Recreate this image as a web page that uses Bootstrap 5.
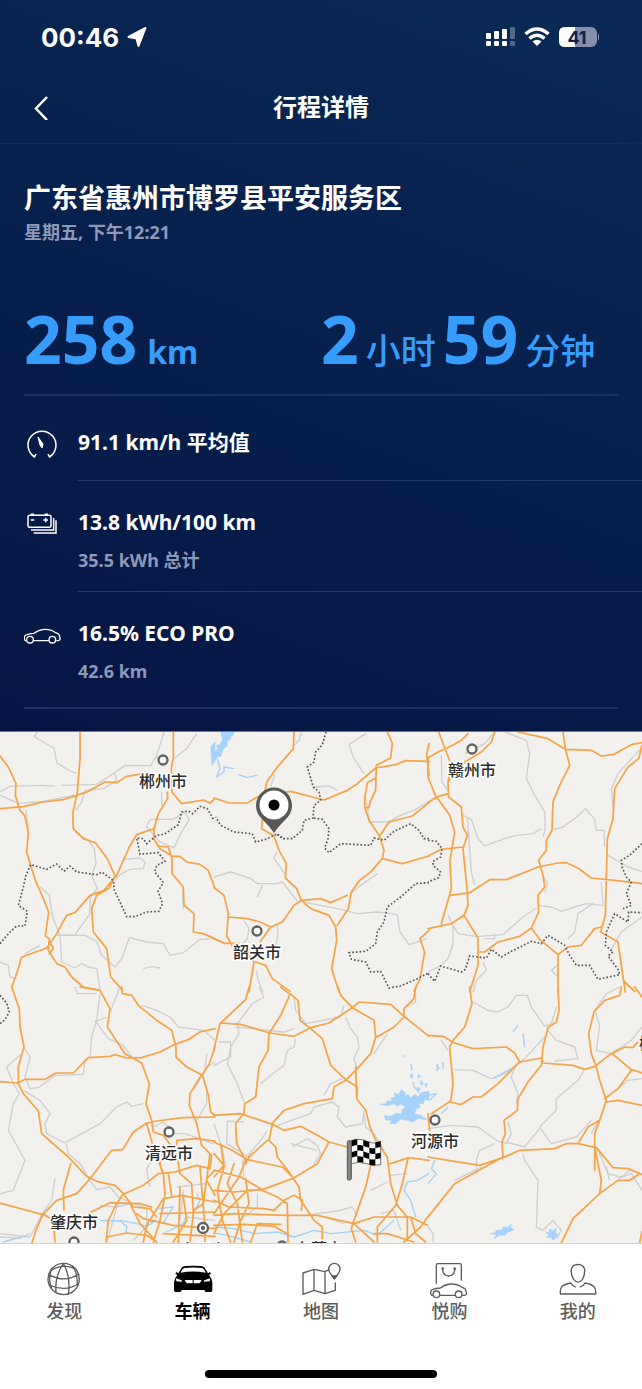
<!DOCTYPE html>
<html lang="zh-CN">
<head>
<meta charset="utf-8">
<meta name="viewport" content="width=device-width, initial-scale=1">
<title>行程详情</title>
<link href="https://cdn.jsdelivr.net/npm/bootstrap@5.3.0/dist/css/bootstrap.min.css" rel="stylesheet">
<style>
  body { font-family: "Noto Sans", "Noto Sans CJK SC", sans-serif; background: #fff; color: #fff; }
  svg { display: block; flex: none; }
  .trip { background: linear-gradient(200deg, #0a2a55 0%, #08234f 30%, #071d49 60%, #061644 100%); padding-bottom: 22px; }
  .status { height: 74px; padding: 0 43px 0 41px; font-family: "Inter", sans-serif; font-weight: 700; font-size: 26px; }
  .topbar { height: 70px; border-bottom: 1px solid #142c5a; padding: 0 24px 4px; }
  .topbar h1 { font-size: 24px; line-height: 36px; margin: 0; font-weight: 700; }
  .side { width: 48px; height: 48px; }
  .back { border: 0; background: none; padding: 0 9px; color: #fff; }
  .place h2 { font-size: 27px; line-height: 36px; font-weight: 700; margin: 0; padding-top: 36px; }
  .muted { font-size: 18px; line-height: 24px; font-weight: 700; color: #8d99b8; }
  .stats { color: #369dff; border-bottom: 2px solid #1c315f; padding: 52px 0 0; line-height: 84px; }
  .figures { gap: 7px; }
  .num { font-size: 66px; font-weight: 700; }
  .unit { font-size: 35px; font-weight: 500; }
  .unit-latin { font-size: 32px; font-weight: 700; padding-left: 3px; }
  .icon-cell { width: 54px; }
  .line-title { font-size: 21px; line-height: 28px; font-weight: 700; }
  .entry { padding-top: 27px; padding-bottom: 19px; }
  .ruled { border-bottom: 1px solid #263a66; }
  .end-rule { border-bottom: 2px solid #1c315f; }
  .map-area { background: #f2f1ee; border-top: 1px solid #6d76a0; border-bottom: 1px solid #d4d4d4; }
  .map-area svg { width: 100%; height: auto; }
  .road { fill: none; stroke: #f5a448; stroke-width: 5.2; stroke-linejoin: round; stroke-linecap: round; }
  .minor { fill: none; stroke: #cfcfd1; stroke-width: 4; stroke-linejoin: round; }
  .border-dots { fill: none; stroke: #555; stroke-width: 5; stroke-dasharray: 5 6; }
  .river { fill: none; stroke: #a5d0f5; stroke-width: 4; stroke-linejoin: round; }
  .lake { fill: #a5d3fb; stroke: #a5d3fb; stroke-width: 2; }
  .town { fill: #fff; stroke: #606060; stroke-width: 2.3; }
  .city { font: 500 16px "Noto Sans CJK SC", sans-serif; fill: #2b2b2b; stroke: #fff; stroke-width: 3px; paint-order: stroke; text-anchor: middle; }
  .tabs { padding-top: 17px; padding-bottom: 47px; }
  .tab-link { flex: 1 1 0; color: #5c5c5c; text-decoration: none; font-size: 18px; line-height: 24px; font-weight: 500; }
  .tab-link.active { color: #000; font-weight: 700; }
  .thin { fill: none; stroke: currentColor; stroke-width: 4; stroke-linejoin: round; stroke-linecap: round; }
  .home { width: 36%; height: 8px; border-radius: 4px; background: #000; }
</style>
</head>
<body>
<svg width="0" height="0" class="position-absolute" aria-hidden="true">
  <symbol id="sedan" viewBox="0 0 117 54">
    <path fill="none" stroke="currentColor" stroke-width="4" stroke-linejoin="round" d="M10 41H8Q4 38 5 31Q5 27 10 24Q20 20 34 19Q48 8 64 7Q84 6 99 17L108 21Q113 30 112 37Q112 40 106 41H101M32 41H78"/>
    <circle cx="22" cy="38" r="10" fill="none" stroke="currentColor" stroke-width="4"/><circle cx="89" cy="38" r="10" fill="none" stroke="currentColor" stroke-width="4"/>
  </symbol>
</svg>

<main>
<section class="trip">
  <div class="status d-flex align-items-center justify-content-between">
    <div class="d-flex align-items-center gap-2"><span>00:46</span>
      <svg width="20" height="22" viewBox="0 0 20 22" fill="#fff" stroke="#fff" stroke-width="2" stroke-linejoin="round"><path d="M18.500 2L11.500 20L9.500 12.500L1.500 11Z"/></svg>
    </div>
    <div class="d-flex align-items-center gap-2">
      <svg width="31" height="20" viewBox="0 0 31 20" fill="#fff"><rect x="1" y="6" width="5" height="6" rx="1"/><rect x="9" y="4" width="5" height="8" rx="1"/><rect x="17" y="2" width="5" height="10" rx="1"/><rect x="25" y="0" width="5" height="12" rx="1" opacity=".3"/><rect x="1" y="14" width="5" height="5" rx="1"/><rect x="9" y="14" width="5" height="5" rx="1"/><rect x="17" y="14" width="5" height="5" rx="1"/><rect x="25" y="14" width="5" height="5" rx="1" opacity=".3"/></svg>
      <svg width="26" height="20" viewBox="0 0 26 20" fill="none" stroke="#fff" stroke-width="3.500"><path d="M1.500 7Q13-3 24.500 7M5.500 11.500Q13 5 20.500 11.500"/><path d="M13 19L8.500 14.500Q13 11 17.500 14.500Z" fill="#fff" stroke="none"/></svg>
      <svg width="41" height="22" viewBox="0 0 41 22"><rect x="1" y="1" width="38" height="20" rx="6" fill="#8490ab"/><path d="M17 1H7Q1 1 1 7V15Q1 21 7 21H17Z" fill="#fff"/><path d="M40 7.500Q41.500 9 41.500 11T40 14.500Z" fill="#8490ab"/><text x="19" y="17.500" text-anchor="middle" font-size="18" fill="#0a2350">41</text></svg>
    </div>
  </div>

  <header class="topbar d-flex align-items-center justify-content-between">
    <button type="button" class="back side" aria-label="返回"><svg width="18" height="26" viewBox="0 0 18 26" fill="none" stroke="#fff" stroke-width="2.500"><path d="M14 3L3 14.500L14 26"/></svg></button>
    <h1>行程详情</h1>
    <span class="side"></span>
  </header>

  <div class="px-4">
    <div class="place">
      <h2>广东省惠州市博罗县平安服务区</h2>
      <p class="muted m-0 pt-1">星期五, 下午12:21</p>
    </div>
    <div class="stats row g-0">
      <div class="figures col-6 d-flex align-items-baseline"><span class="num">258</span><span class="unit-latin">km</span></div>
      <div class="figures col-6 d-flex align-items-baseline"><span class="num">2</span><span class="unit">小时</span><span class="num">59</span><span class="unit">分钟</span></div>
    </div>
  </div>

  <div class="ps-4 d-flex">
    <div class="icon-cell pt-3"><svg class="mt-3" width="36" height="34" viewBox="24 428 36 34" fill="none" stroke="#fff" stroke-width="1.500"><path d="M36 454L34.500 457A14 14 0 1 1 49.500 457L48 454"/><path d="M38 437L43 444L42 448L40 445Z" fill="#fff" stroke-width="1"/></svg></div>
    <div class="flex-grow-1 entry ruled line-title pt-4 pb-4"><div class="pt-2">91.1 km/h 平均值</div></div>
  </div>
  <div class="ps-4 d-flex">
    <div class="icon-cell entry"><svg class="mt-1" width="36" height="24" viewBox="74 64 108 72" fill="none" stroke="#fff" stroke-width="4.500"><rect x="86" y="74" width="69" height="36" rx="5"/><path d="M94 71H104M136 71H146M94 88H105M132 88H146M139 81V95M95 118H163V82M103 127H170V89"/></svg></div>
    <div class="flex-grow-1 entry ruled"><div class="line-title">13.8 kWh/100 km</div><div class="muted mt-2 pt-1">35.5 kWh 总计</div></div>
  </div>
  <div class="mx-4 d-flex end-rule">
    <div class="icon-cell entry"><svg class="mt-2" width="37" height="18" viewBox="4 0 111 54"><use href="#sedan" width="117" height="54"/></svg></div>
    <div class="flex-grow-1 entry pb-4"><div class="line-title">16.5% ECO PRO</div><div class="muted mt-2 pt-1">42.6 km</div></div>
  </div>
</section>

<section class="map-area" aria-label="行程地图">
<svg viewBox="0 0 642 511" role="img" aria-label="路线图">
  <!-- north-west -->
  <g transform="scale(.33333)">
    <path class="minor" d="M112 0L103 14L140 36L162 48L170 92L205 114L228 124M0 180L30 163L125 160L165 163M185 160L290 157L340 125L375 100L452 101L470 70L492 0M0 190L55 214L130 208L220 190M590 5L560 50L516 85M345 125L350 145L310 170L255 175L245 210L228 235M445 270L455 262L520 262L553 240L568 262L545 300L522 347L480 330L440 285L445 270M370 382L420 378L435 390L430 410L390 412L360 428L345 445M225 300L265 325L283 350L288 395L275 430L292 470L272 495L268 548L225 608L172 610M78 235L85 290M120 465L148 490L158 555L180 610L185 690L225 708L245 695L265 705L290 710L300 770M185 610L255 610L290 628L305 670L345 705L365 680L388 617L440 630L490 635L510 670L550 662L600 622L645 620M430 710L455 704L480 708M0 690L25 700L30 735L50 740M120 640L75 665M485 180V220M548 470L550 530"/>
    <path class="road" d="M0 72L25 105L48 155L46 190L60 235L74 250L85 300L80 360L95 410L110 455L128 495L146 540L136 612L148 620L145 655L170 695L195 705L215 735L250 765L298 774M240 0L240 80L232 180L218 245L220 290L250 320L287 333L322 380L345 432L328 468L290 490L275 530L280 600L320 650L332 735L368 775M0 230L70 224L128 210L190 203L265 178L315 150L350 152L380 133L435 124M520 0V75L514 110L516 180L545 215L610 204L630 213L645 200M502 180L503 200L475 245L462 290L410 308L388 345L350 430L312 475L270 490L225 542L200 550L170 605L140 648L65 675L50 725L35 765M462 290V322L480 350L518 373L540 373L560 390L600 397L625 415L645 470M475 342L505 345L516 380V425L550 465L552 520L582 545L580 600L610 605L645 620M148 665L160 650L150 630"/>
    <path class="border-dots" d="M0 635L30 600L50 582H75L82 538L55 520L70 465L78 430L92 398L140 412L170 396L192 418L210 402L230 420L290 428L305 420L340 445L343 475L360 510L380 554H405L440 540L476 538L488 515L474 478L490 452L464 420L470 400L495 388L475 362L420 367L410 318L430 320L440 335L470 310L493 307L535 278L545 240L565 237L578 245L600 223L622 230L640 262"/>
    <path class="lake" d="M632 45L645 30V85L636 100Z"/>
  </g>
  <!-- north -->
  <g transform="translate(214) scale(.33333)">
    <path class="lake" d="M20 0H62L55 12L48 10L50 20L38 30L40 42L28 50L20 75L12 72L0 92V60L12 52L8 40L18 38L26 20Z"/><path class="river" d="M10 80L18 110L8 135L30 120L30 105L60 110M72 128L100 136L130 130"/>
    <path class="minor" d="M262 0L255 25L240 40M170 163L182 130M300 165L345 162L370 175M455 5L405 38L420 80L450 125M455 200L468 270L520 270L560 250L600 235L645 208M188 360L180 378L215 430M0 435L50 420L110 440L130 455L190 455L205 450L250 507M145 460L130 495M268 510L370 530L430 545L490 540L550 548L558 600L585 638L640 620M90 565L105 590L100 620L82 638M190 580L192 610L180 665M128 715L132 745L148 780M410 485L440 460L490 425"/>
    <path class="road" d="M240 0L238 50L190 105L158 150L150 195L143 290L180 312L195 355L217 395L214 438L248 470L262 505L290 530L345 550L365 585L368 625L353 710L375 780M0 198L45 213L100 213L130 195L230 178L330 204L400 175L430 155L485 108L545 98L575 86L645 88M520 0L535 35L530 78L487 100L485 175L468 210L465 228L452 225V200L460 152L485 138M452 225L465 265L495 310L510 355L505 380L470 420L437 445L412 480L403 530L370 580M645 212L595 252L525 270L495 315M505 380L565 395L645 372M262 505L320 500L350 512L400 490M0 467L30 490L43 545L38 612L65 660M43 555L100 560L138 570L170 585L205 570L240 520L260 507M170 585L138 630M0 620L32 634H75M80 640L120 690L105 780M125 690L155 700L175 740L228 778M645 595L618 620L632 660L618 740L600 778M645 35L638 68L645 130"/>
    <path class="border-dots" d="M336 0L325 38L305 60L300 90L280 105L298 165L315 180L320 205L300 220L297 258L270 265L265 295L235 320L205 320L190 305L155 322L125 330L115 305L60 300L20 280L5 255M300 258L325 262L345 290L342 320L332 348L345 362L380 335L470 340L480 318L510 325L540 298L590 275L615 295L630 320H645M645 452L605 455L560 495L520 525L510 570L490 600L485 635L455 658L405 662L412 682L455 690L470 720L500 718L525 768L560 762L610 740L645 722"/>
    <path class="border-dots" d="M190 308L210 320"/>
  </g>
  <!-- north-east -->
  <g transform="translate(428) scale(.33333)">
    <path class="minor" d="M195 5L170 35L110 65M230 0L295 25L305 65L295 140L320 190L350 240L352 290L345 315M378 292L405 285L440 260L472 230L500 262L505 295H528L530 345M0 210L25 200M40 70L42 150L62 178M105 250L130 262L150 320L170 342L230 320L265 310L315 305L340 290M118 255L130 420L140 460M330 520L370 525L400 538L440 525L475 515L525 520L520 450M495 515L450 545L440 600L420 620M60 550L75 580L90 605L145 614L225 608L285 555L325 528M75 580V635L60 680L40 700L0 720M170 620H200V605M540 370L600 405L642 418M638 50L570 125L550 170L555 230M345 430L358 455L350 480M642 555L580 600L548 655M165 690L175 715L145 745L135 780M388 700L370 715L390 735"/>
    <path class="road" d="M0 78L30 60L70 42L100 25L120 5M32 0L70 100L60 150L62 195L100 225L105 285L118 310L105 350L118 480L120 520L108 550L70 575L0 590M0 80V135L22 190L65 250L80 300L66 385L70 470L40 575M200 0L190 30L160 60L110 90L60 150M0 212L25 195L60 185M270 0L360 20L412 52L490 55L520 72L555 68L610 38L642 32M405 0L412 50L425 100L395 160L375 210L372 295L355 325V355L332 385L345 430L350 465L330 490L332 540L310 588L335 622L390 668V780M642 40L632 80L600 105L560 170L555 260L538 320L532 550L518 600L570 630L580 700L592 780M0 372L40 352L105 345M68 490L125 482L185 443H235L330 405L390 393L415 392L450 408L490 438L560 445L642 455M108 550L150 618V700L125 780M150 660H170L210 630L275 613L310 588M390 668L420 645L460 640L500 590L518 585M590 750L620 778"/>
    <path class="border-dots" d="M0 325L25 328L42 350L38 375L15 388L15 400L38 420L32 437L0 450M0 725L20 748L38 702L100 720L112 712L125 672L175 678L190 652L220 675L250 658L310 628L340 635L360 610L410 640L425 670L445 700L485 700L510 742L575 728L570 712L540 672L555 660L532 640L535 600L560 545L600 570L602 540L642 542M642 335L605 370L580 385L582 405L595 435L610 450L595 485L610 520L585 530"/>
  </g>
  <!-- south-west -->
  <g transform="translate(0 255) scale(.33333)">
    <path class="minor" d="M300 20L290 100L275 150L270 210M225 0L232 20H290M360 0L340 50L332 75M285 100L325 155L370 175L395 210M320 90L285 105M425 55L470 70L510 90L535 120L575 125L610 130L645 160M70 180L90 210L75 270L90 305L115 302L165 265L250 262L255 215M65 200L20 240L40 290L58 320L40 350L25 430L75 520L40 610L0 620M70 310L120 340L150 380L135 410L140 440L195 468L208 460L230 448L300 410L350 360L380 345L395 358L430 350M198 470L205 500L240 530L270 580L290 608L330 600L355 630L400 650L440 665V720L400 760M165 575L155 640L130 675L90 750L0 740M360 630L345 680L320 770M460 420L490 405L505 420M500 440L555 440L640 470M470 470L440 550L450 600M530 600L620 590M550 610L540 700M0 750L60 753L90 740M300 655L345 660L395 650M560 690L645 700M620 200L615 250L580 310M620 300V350L590 400M620 240L645 225"/>
    <path class="river" d="M300 700L360 702L380 718L378 740M360 700L410 710L440 718L470 700M470 665L520 660L500 690L490 710M500 735L550 710L560 680M10 765L80 745M580 680L600 640L590 620"/>
    <path class="road" d="M35 0L58 65L60 120L72 180L55 240V290L70 320L115 372L125 440L205 510L260 568L290 583L345 595L370 620L400 660L450 665L470 690M0 284L55 288L75 277H135L168 258H220L265 212L330 208L345 203L380 213L425 212L480 195L525 172L565 158L600 135L645 125M240 0L300 10L330 65L322 120L375 200L425 228L448 290L438 350L455 400L460 435L490 445L530 500L540 560M365 0L367 20L395 25L415 55L470 100L515 130L528 180V210L560 240L605 263L570 320L568 355L590 410L605 475L635 505L630 545M645 180L628 230L607 263L625 325L632 375L645 385M645 390L550 392L470 402L440 408L400 435L368 488L335 490L268 578L230 620L170 640L128 683L0 648M128 683L108 730L95 770M440 410L460 480L490 560L495 625L480 700L460 765M212 530L190 610L192 670M128 680L160 700L165 765M268 678L330 647L420 650L455 660M370 620L350 650L325 700L318 765M370 622L430 595L475 560L525 555L590 535L630 545M290 583L330 592M530 505V460L590 455L645 462M485 550L475 500L500 490M540 560L575 590L580 680L570 765M410 680L430 695L520 715L645 725M430 765L440 715L490 635L545 625L645 645M320 750L380 738L440 745L470 765M505 560L515 625M540 600L535 770M600 540L615 720V770M645 550L620 575L610 650L580 670M480 680L645 675M630 500L620 580L645 625M390 650L420 710L470 765M490 740L645 748M550 630L560 700L520 765"/>
    <path class="border-dots" d="M0 25L20 48L28 75L15 98L0 110"/>
  </g>
  <!-- south -->
  <g transform="translate(214 255) scale(.33333)">
    <path class="minor" d="M135 0L150 30L115 50L70 110L75 140L50 180L40 230L70 290L90 345M15 165H50V210L0 235M65 120L210 135L240 125M245 155L240 180L220 190L210 235L170 265L140 290M240 30L245 70L275 110L380 90L390 55M395 90L410 125L430 150L435 180L420 215L430 245M480 200L520 140M385 275L350 290L330 325M190 415L290 380L300 360L355 345L375 360L370 390L395 420L445 410L450 370M90 405L40 402L38 470L105 510M160 430L140 460L85 525L90 570M235 480L280 455L310 475L320 500L300 530M450 380L455 420L480 440L510 490M270 685L370 672L415 660L430 690M470 610L520 585M530 565L580 560M130 620V660L90 690M0 410L25 485L35 540M580 60L605 45V20M330 690L390 710M500 680L540 670L560 730M230 470L310 490"/>
    <path class="lake" d="M498 352L515 350L520 342L536 342L530 334L545 330L540 318L555 322L562 308L575 318L570 328L582 322L590 332L604 322L612 330L620 318L645 312V340L632 338L628 350L616 348L618 362L608 364L600 380L618 384L640 398L612 394L596 406L580 400L560 396L545 410H528L532 400L514 398L512 386L530 388L548 378L562 382L565 366L576 362L562 352L548 358L540 350L520 356Z"/>
    <path class="lake" d="M610 300L618 304L612 318ZM620 280L628 288L622 296ZM632 292L640 288L636 302ZM590 262H596V272H590ZM612 262L620 268L612 274Z"/>
    <path class="river" d="M570 205L572 210M590 230L594 250M598 285L600 300L610 310M645 560L610 580L580 585L570 610L590 640L605 690M0 720L60 725L120 740L190 735L240 750L300 730L350 740L450 730L490 745L540 700M0 738L40 745L110 765"/>
    <path class="road" d="M105 0L95 38L50 80L18 110L0 185M18 108L80 112L168 138L240 148L290 122L345 108L415 62L435 45L530 52L570 88L645 148M200 0L228 22L200 85L165 140L162 190L135 240L125 330L92 350L90 378L65 410L68 470L95 520L75 570L20 650L0 680M228 20L252 40L258 100L290 125L325 155L350 235L395 278L430 300L428 335L455 370L468 420L485 460L520 510L530 590L550 655L580 690V760M372 0L380 25L415 62L480 100L485 150L470 200L430 245L395 280L360 300L355 335L270 350L210 370L172 412M605 0L600 35L570 65V90L540 120L485 152M0 385L80 380L175 412L165 460L185 480L190 510L225 555L255 600L260 640L300 700L325 720L325 765M175 412L210 430L260 418L310 445L345 465L400 480M345 465L310 530L235 575L145 608L80 570L0 550M0 465L55 490L100 518L205 540L240 575M160 460L105 510L95 530M530 530L585 512L645 520M582 515L565 590L545 655L490 720V765M470 535L455 600L420 700L412 725L425 765M0 610L60 615L140 608L190 630L220 650L222 765M0 640L45 660L150 665L180 670L210 640L240 625L265 640L262 670M0 685L60 680L220 685L310 685L420 710L480 690L590 690L640 715M20 470L30 540L10 610L25 700L50 765M60 530L40 590L70 650L85 765M95 575L105 650L80 700L60 765M0 715L90 712L180 718L220 740M110 765L130 710L200 712M425 240L428 330M590 690L605 740L635 765M480 740H520L600 765M0 500L30 535L0 570M140 608L100 610L30 680L0 740M420 710L480 765M645 685L620 720L570 765"/>
  </g>
  <!-- south-east -->
  <g transform="translate(428 255) scale(.33333)">
    <path class="minor" d="M135 45L180 70L210 75L240 60L265 25H298L310 60L350 118L370 110L385 60M575 0L535 20L500 70L515 115L505 190L550 200L580 180M80 248L135 250L190 275L230 260L290 215L350 150M360 130L385 160L440 180L450 215L380 222M468 250L450 280L385 335V370L335 420L370 470L445 450L490 400M265 230L250 270L270 320L265 350M240 405L250 440L235 470L205 460L150 420L70 415L0 425M235 465L290 480L335 425M200 470L155 490L145 520V560M285 500L290 520L330 580L325 720L345 730L375 700L400 730L385 755M642 275L600 280L540 330M510 490L540 560L580 570L605 550M642 120L610 160L580 180M60 190L40 160M490 440L510 400M160 540L80 580M535 540L545 580M0 720L15 740V765M570 575L610 560L642 610"/>
    <path class="lake" d="M185 740L200 738L205 730L222 730L225 720L240 722L250 710L248 722L258 728L240 735L232 744L212 745L200 755L205 742ZM352 735L362 738L366 726L375 732L385 722L382 738L390 742L375 760L368 750L355 752L362 744Z"/>
    <path class="river" d="M28 230V245M45 225V245M34 240L25 252M255 135L270 115M285 140L290 180M0 325L25 320L5 340M195 275L240 250L260 240M40 380L60 360M20 520L10 545L25 560L0 590"/>
    <path class="road" d="M125 0L132 50L110 120L75 160L65 180L75 290L68 342L10 380M0 145L45 148L80 168L135 185L235 180L260 198L275 225L340 213L345 228L435 235L470 247L500 238L550 200L590 180L615 182L642 150M390 0L393 70L385 105L360 122L345 180L340 235L300 285L270 335L268 370L228 400L232 440L222 465L225 510L80 590L20 665L0 690M580 0L575 25L530 40L498 75L482 140L490 200L505 240L515 280L535 340L515 400L500 440V480L520 580L515 620L435 695L400 768M275 225L210 290L160 330L135 330L98 353L68 345M0 510L60 520L155 535L225 512L275 490L380 485L415 470H450L505 482L555 542L600 545L642 562M515 620L570 580L605 580L635 560M450 470L480 420L515 400M552 200L610 248L642 258M610 250L570 305L530 335M535 345L570 340L642 355M620 0L642 30M642 735L635 765M0 380L5 430M500 480V550"/>
  </g>

  <g class="town"><circle cx="163" cy="28" r="4.500"/><circle cx="472" cy="17" r="4.500"/><circle cx="257" cy="199" r="4.500"/><circle cx="169" cy="400" r="4.500"/><circle cx="435" cy="388" r="4.500"/><circle cx="74" cy="510" r="4.500"/><circle cx="203" cy="496" r="5"/><circle cx="203" cy="496" r="1"/><circle cx="282" cy="514" r="4.500"/></g>
  <g class="city"><text x="163" y="55">郴州市</text><text x="472" y="44">赣州市</text><text x="257" y="226">韶关市</text><text x="169" y="427">清远市</text><text x="435" y="415">河源市</text><text x="74" y="496">肇庆市</text><text x="203" y="524">广州市</text><text x="319" y="523">东莞市</text><text x="663" y="317">梅州市</text></g>

  <!-- start pin and finish flag -->
  <path d="M274 101Q270 95 262 87A18 18 0 1 1 286 87Q278 95 274 101Z" fill="#575757"/><circle cx="274" cy="73" r="14.500" fill="#fff"/><circle cx="274" cy="73" r="5.500"/>
  <g transform="translate(214 255) scale(.33333)">
    <path d="M410 462Q435 452 460 463T500 463V533Q480 538 458 530T410 530Z" fill="#fff" stroke="#333" stroke-width="2"/>
    <path d="M412 461Q422 457 430 457V474Q420 475 412 479ZM448 459Q457 463 466 465V482Q457 480 448 476ZM484 466L500 463V480L484 483ZM430 474Q440 473 448 476V493Q440 490 430 491ZM466 482Q476 485 484 483V500Q475 502 466 499ZM412 496Q420 492 430 491V508Q420 509 412 513ZM448 493Q457 497 466 499V516Q457 514 448 510ZM484 500L500 497V514L484 517ZM430 508Q440 507 448 510V527Q440 524 430 525ZM466 516Q476 519 484 517V535Q475 536 466 533Z"/>
    <rect x="400" y="461" width="12" height="118" rx="5" fill="#858585" stroke="#555" stroke-width="3"/>
  </g>
</svg>
</section>
</main>

<nav class="bg-white" aria-label="主导航">
  <div class="tabs d-flex">
    <a href="#discover" class="tab-link d-flex flex-column align-items-center"><svg class="thin" width="40" height="38" viewBox="134 60 120 114"><circle cx="193" cy="114" r="47"/><path d="M192 68Q215 105 207 160M192 68Q166 105 170 154M155 88Q195 65 227 84M148 100Q195 128 238 99M151 132Q195 154 236 129M158 82Q145 110 156 140M219 75Q235 94 234 133"/></svg>发现</a>
    <a href="#vehicle" class="tab-link active d-flex flex-column align-items-center" aria-current="page"><svg width="40" height="38" viewBox="518 60 120 114"><path d="M534 97L545 79Q548 76 555 75Q578 73 601 75Q609 76 612 79L623 97L629 93L632 98L626 102Q635 113 636 124V148Q636 153 632 153H617Q613 153 612 147H544Q543 153 539 153H525Q521 153 521 148V124Q522 112 531 102L525 98L528 93Z"/><path d="M541 95Q545 84 551 81Q578 78 606 81Q613 85 616 95Q578 88 541 95Z" fill="#fff"/><path d="M527 112L544 118L546 122L528 121ZM629 112L612 118L610 122L628 121ZM553 117H577V127H560Q555 123 553 117ZM580 117H604Q602 123 597 127H580Z" fill="#fff"/></svg>车辆</a>
    <a href="#map" class="tab-link d-flex flex-column align-items-center"><svg class="thin" width="40" height="38" viewBox="906 60 120 114"><path d="M990 86L978 92L945 85L912 96V160L945 148L978 158L1009 148V126M945 85V148M978 92V158"/><path d="M1006 113Q989 94 989 84A17 17 0 0 1 1023 84Q1023 94 1006 113Z"/><path d="M999 105H1013L1006 114Z" fill="currentColor"/></svg>地图</a>
    <a href="#shop" class="tab-link d-flex flex-column align-items-center"><svg class="thin" width="40" height="38" viewBox="326 60 120 114"><path d="M348 127V73Q348 68 353 68H418Q423 68 423 73V117M367 86Q368 104 385 105Q402 104 403 86"/><circle cx="367" cy="83" r="2"/><circle cx="403" cy="83" r="2"/><use href="#sedan" x="326" y="122" width="117" height="54"/></svg>悦购</a>
    <a href="#me" class="tab-link d-flex flex-column align-items-center"><svg class="thin" width="40" height="38" viewBox="710 60 120 114"><path d="M770 70Q787 71 790 85Q791 103 783 115Q770 132 757 115Q748 102 750 85Q753 71 770 70ZM748 126Q727 130 720 139Q716 146 717 159H823Q824 146 819 138Q810 129 791 126Q788 133 777 138M748 126Q752 133 762 138"/></svg>我的</a>
  </div>
  <div class="home mx-auto"></div>
  <div class="pb-2 pt-1"></div>
</nav>
<script src="https://cdn.jsdelivr.net/npm/bootstrap@5.3.0/dist/js/bootstrap.bundle.min.js"></script>
</body>
</html>
